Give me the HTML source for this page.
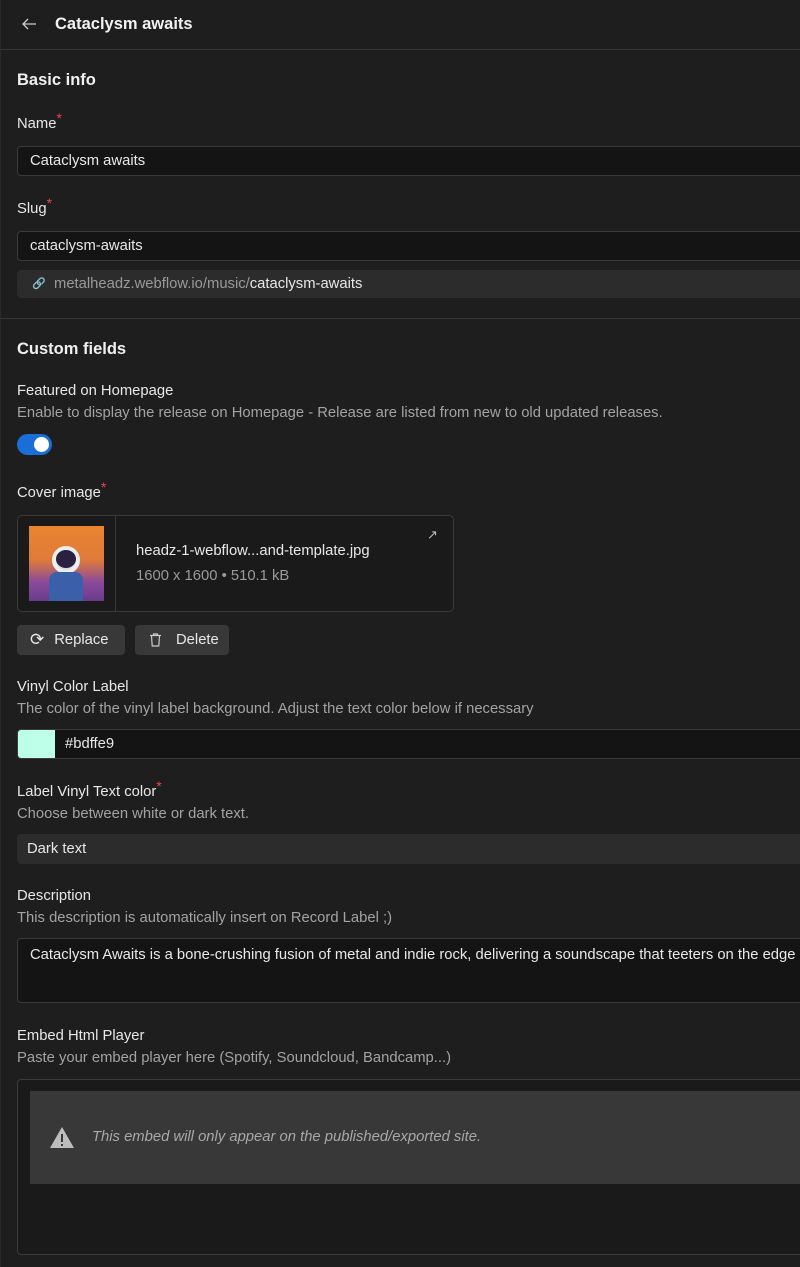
<!DOCTYPE html>
<html><head><style>
*{box-sizing:border-box;margin:0;padding:0}
body{width:800px;height:1267px;background:#1e1e1e;color:#e6e6e6;font-family:"Liberation Sans",sans-serif;font-size:14.8px;overflow:hidden;position:relative;border-left:1px solid #2a2a2a}
.a{position:absolute}
.lbl{position:absolute;left:16px;font-size:14.8px;color:#e8e8e8}
.req{color:#f04545;font-size:14px;position:relative;top:-5px}
.hint{position:absolute;left:16px;font-size:14.8px;color:#a3a3a3}
.inp{position:absolute;left:16px;width:800px;background:#141414;border:1px solid #3a3a3a;border-radius:4px;padding-left:12px;display:flex;align-items:center;color:#e8e8e8}
.h{position:absolute;left:16px;font-size:16.5px;font-weight:bold;color:#f0f0f0}
.btn{position:absolute;top:625px;height:30px;background:#383838;border-radius:4px;display:flex;align-items:center;color:#e8e8e8;font-size:14.8px}
</style></head><body>
<div class="a" style="left:0;top:0;width:800px;height:50px;border-bottom:1px solid #363636"></div>
<svg class="a" style="left:20px;top:17px" width="16" height="14" viewBox="0 0 16 14"><path d="M15 7H2M7 2L2 7l5 5" stroke="#ccc" stroke-width="1.3" fill="none"/></svg>
<div class="a" style="left:54px;top:15px;font-size:16.5px;font-weight:bold;color:#f2f2f2">Cataclysm awaits</div>
<div class="h" style="top:71px">Basic info</div>
<div class="lbl" style="top:115px">Name<span class="req">*</span></div>
<div class="inp" style="top:146px;height:30px">Cataclysm awaits</div>
<div class="lbl" style="top:200px">Slug<span class="req">*</span></div>
<div class="inp" style="top:231px;height:30px">cataclysm-awaits</div>
<div class="a" style="left:16px;top:270px;width:800px;height:28px;background:#2c2c2c;border-radius:4px"></div>
<div class="a" style="left:31px;top:277px;font-size:11px;color:#777">&#128279;</div>
<div class="a" style="left:53px;top:276px;color:#9a9a9a">metalheadz.webflow.io/music/<span style="color:#e8e8e8">cataclysm-awaits</span></div>
<div class="a" style="left:0;top:318px;width:800px;border-top:1px solid #363636"></div>
<div class="h" style="top:340px">Custom fields</div>
<div class="lbl" style="top:383px">Featured on Homepage</div>
<div class="hint" style="top:405px">Enable to display the release on Homepage - Release are listed from new to old updated releases.</div>
<div class="a" style="left:16px;top:434px;width:35px;height:21px;border-radius:11px;background:#1a6fd6"></div>
<div class="a" style="left:33px;top:437px;width:15px;height:15px;border-radius:50%;background:#fff"></div>
<div class="lbl" style="top:484px">Cover image<span class="req">*</span></div>
<div class="a" style="left:16px;top:515px;width:437px;height:97px;border:1px solid #3a3a3a;border-radius:5px;background:#1a1a1a"></div>
<div class="a" style="left:114px;top:516px;width:1px;height:95px;background:#3a3a3a"></div>
<div class="a" style="left:28px;top:526px;width:75px;height:75px;background:linear-gradient(180deg,#e8842e 0%,#e07a3a 45%,#8a4a9a 75%,#6a3c8c 100%)"></div>
<div class="a" style="left:51px;top:546px;width:28px;height:28px;border-radius:50%;background:#ddd;border:4px solid #eee"></div>
<div class="a" style="left:55px;top:550px;width:20px;height:18px;border-radius:50%;background:#2a2040"></div>
<div class="a" style="left:48px;top:572px;width:34px;height:29px;background:#3b5fa8;border-radius:8px 8px 0 0"></div>
<div class="a" style="left:135px;top:543px;color:#e8e8e8">headz-1-webflow...and-template.jpg</div>
<div class="a" style="left:135px;top:568px;color:#9a9a9a">1600 x 1600 • 510.1 kB</div>
<div class="a" style="left:426px;top:527px;color:#bbb;font-size:13px">↗</div>
<div class="btn" style="left:16px;width:108px;padding-left:13px"><span style="font-size:17px;margin-right:10px">⟳</span>Replace</div>
<div class="btn" style="left:134px;width:94px;padding-left:14px"><svg width="13" height="14" viewBox="0 0 13 14" style="margin-right:14px"><path d="M1 2.5h11M4.5 2.5V1h4v1.5M2.5 2.5l.7 10.5h6.6l.7-10.5" stroke="#ccc" stroke-width="1.2" fill="none"/></svg>Delete</div>
<div class="lbl" style="top:679px">Vinyl Color Label</div>
<div class="hint" style="top:701px">The color of the vinyl label background. Adjust the text color below if necessary</div>
<div class="inp" style="top:729px;height:30px;padding-left:0"><div style="width:37px;height:28px;background:#bdffe9;border-radius:3px 0 0 3px;margin-right:10px"></div>#bdffe9</div>
<div class="lbl" style="top:783px">Label Vinyl Text color<span class="req">*</span></div>
<div class="hint" style="top:806px">Choose between white or dark text.</div>
<div class="a" style="left:16px;top:834px;width:800px;height:30px;background:#2c2c2c;border-radius:4px;padding:7px 10px;color:#e8e8e8">Dark text</div>
<div class="lbl" style="top:888px">Description</div>
<div class="hint" style="top:910px">This description is automatically insert on Record Label ;)</div>
<div class="inp" style="top:938px;height:65px;align-items:flex-start;padding-top:8px;white-space:nowrap;overflow:hidden">Cataclysm Awaits is a bone-crushing fusion of metal and indie rock, delivering a soundscape that teeters on the edge</div>
<div class="lbl" style="top:1028px">Embed Html Player</div>
<div class="hint" style="top:1050px">Paste your embed player here (Spotify, Soundcloud, Bandcamp...)</div>
<div class="inp" style="top:1079px;height:176px;background:#1a1a1a"></div>
<div class="a" style="left:29px;top:1091px;width:780px;height:93px;background:#383838"></div>
<svg class="a" style="left:48px;top:1126px" width="26" height="23" viewBox="0 0 26 23"><path d="M13 1L25 22H1Z" fill="#bdbdbd"/><rect x="12" y="8" width="2" height="8" fill="#383838"/><rect x="12" y="18" width="2" height="2" fill="#383838"/></svg>
<div class="a" style="left:91px;top:1129px;color:#a8a8a8;font-style:italic">This embed will only appear on the published/exported site.</div>
</body></html>
